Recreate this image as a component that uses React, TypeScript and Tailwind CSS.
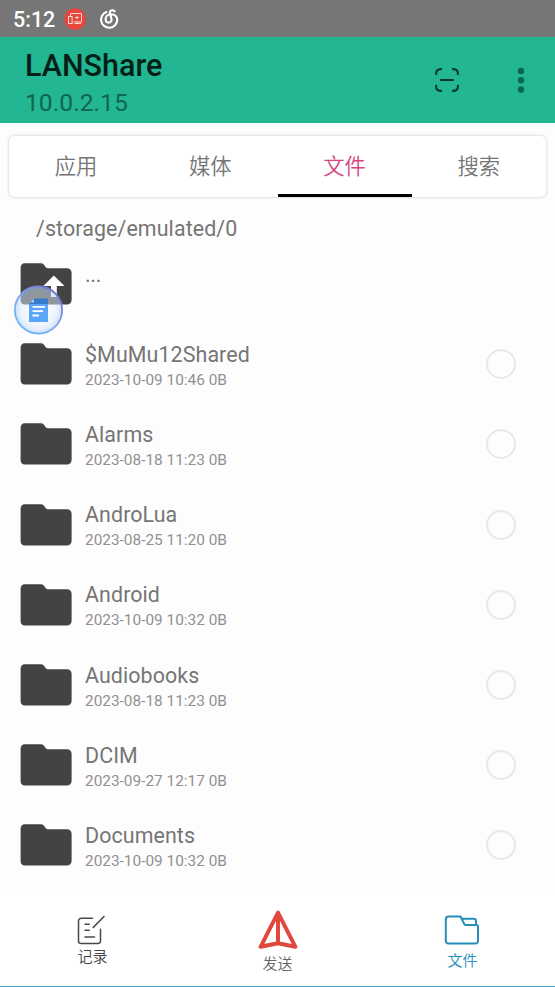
import clsx from "clsx";

type Entry = { name: string; meta: string };

const entries: Entry[] = [
  { name: "$MuMu12Shared", meta: "2023-10-09 10:46 0B" },
  { name: "Alarms", meta: "2023-08-18 11:23 0B" },
  { name: "AndroLua", meta: "2023-08-25 11:20 0B" },
  { name: "Android", meta: "2023-10-09 10:32 0B" },
  { name: "Audiobooks", meta: "2023-08-18 11:23 0B" },
  { name: "DCIM", meta: "2023-09-27 12:17 0B" },
  { name: "Documents", meta: "2023-10-09 10:32 0B" },
];

const tabs = ["应用", "媒体", "文件", "搜索"];
const activeTab = "文件";

export default function App() {
  return (
    <div className="relative flex h-[987px] w-[555px] flex-col overflow-hidden bg-[#fdfdfd] font-['Roboto','Noto_Sans_CJK_SC',sans-serif] text-[#757575]">
      <StatusBar />
      <AppBar />
      <TabStrip />
      <p className="mt-[18px] pl-9 text-[21.4px] leading-[28px] tracking-[0.1px]">
        /storage/emulated/0
      </p>
      <main className="flex flex-col">
        <ParentRow />
        {entries.map((entry) => (
          <EntryRow key={entry.name} entry={entry} />
        ))}
      </main>
      <BottomNav />
      <FloatingBubble />
    </div>
  );
}

function StatusBar() {
  return (
    <div className="flex h-[37px] shrink-0 items-center bg-[#767676] pl-[13px] text-white">
      <span className="w-[51px] pt-[2px] text-[21.5px] leading-none font-medium">5:12</span>
      <svg className="h-[22px] w-[22px]" viewBox="0 0 22 22" fill="none">
        <circle cx="11" cy="11" r="10.8" fill="#e5473c" />
        <g stroke="#fbd5d1" strokeWidth="1">
          <path d="M6.5 8V5.5H17.5v8.4H9.5" />
          <rect x="4.5" y="8.5" width="3.6" height="7" />
          <path d="M4 15.5h4.6M13.2 14v1.8M10.5 15.5h6.6M11 9.5h4M13 7.8v3.4" />
        </g>
      </svg>
      <svg
        className="ml-[14px] h-[20px] w-[20px]"
        viewBox="0 0 20 20"
        fill="none"
        stroke="white"
        strokeWidth="2.1"
        strokeLinecap="round"
      >
        <path d="M6.5 3A8.1 8.1 0 1 0 17.3 10.9C17.3 7.2 14.1 5 10.8 5.2C7.5 5.4 5.5 7.8 5.6 10.3C5.7 12.3 7 13.6 8.7 13.6C10.7 13.6 11.9 11.9 11.4 9.8L10 4.2C9.6 2.3 10.7 1.2 12.2 1.2C13.2 1.2 14 1.7 14.6 2.3" />
      </svg>
    </div>
  );
}

function AppBar() {
  return (
    <header className="flex h-[86px] shrink-0 bg-[#23b692]">
      <div className="flex-1 pl-[25px]">
        <h1 className="mt-[11px] text-[30.5px] leading-[36px] font-medium text-[#041f18]">LANShare</h1>
        <p className="mt-[4px] text-[24.7px] leading-[30px] text-[#0f6550]">10.0.2.15</p>
      </div>
      <svg
        className="mt-[31px] h-6 w-6"
        viewBox="0 0 24 24"
        fill="none"
        stroke="#0a382d"
        strokeWidth="2.2"
        strokeLinecap="round"
      >
        <path d="M1.1 6.1V5.4A4.3 4.3 0 0 1 5.4 1.1H6.1M17.9 1.1h.7a4.3 4.3 0 0 1 4.3 4.3v.7M22.9 17.9v.7a4.3 4.3 0 0 1-4.3 4.3h-.7M6.1 22.9h-.7a4.3 4.3 0 0 1-4.3-4.3v-.7M6 12h12" />
      </svg>
      <svg className="mt-[30px] mr-[30px] ml-[58px] h-[27px] w-2" viewBox="0 0 8 27" fill="#0b6650" overflow="visible">
        <circle cx="4" cy="4" r="3.2" />
        <circle cx="4" cy="13.2" r="3.2" />
        <circle cx="4" cy="22.5" r="3.2" />
      </svg>
    </header>
  );
}

function TabStrip() {
  return (
    <nav className="mx-[9px] mt-[13px] flex h-[61px] shrink-0 rounded-[5px] bg-white shadow-[0_0_3px_rgba(0,0,0,0.25)]">
      {tabs.map((tab) => (
        <div
          key={tab}
          className={clsx(
            "flex flex-1 items-center justify-center border-b-[3px] pt-[4px] text-[21.3px] leading-none font-[350]",
            tab === activeTab ? "border-black text-[#d6447f]" : "border-transparent",
          )}
        >
          {tab}
        </div>
      ))}
    </nav>
  );
}

function FolderIcon({ up = false }: { up?: boolean }) {
  return (
    <svg className="mt-[20px] h-[42px] w-[52px] shrink-0" viewBox="0 0 52 42">
      <path
        d="M5 .2H21.2a3 3 0 0 1 2.1 .9L26 4.4a2.4 2.4 0 0 0 1.8 .8H47a4.6 4.6 0 0 1 4.6 4.6V36.9a4.6 4.6 0 0 1-4.6 4.6H5A4.6 4.6 0 0 1 .6 36.9V4.8A4.6 4.6 0 0 1 5 .2Z"
        fill="#434343"
      />
      {up && <path d="M33.8 12.6 44.5 23H36.8V34H31V23H23.3Z" fill="white" />}
    </svg>
  );
}

function ParentRow() {
  return (
    <div className="flex h-[80.2px] pl-[20px]">
      <FolderIcon up />
      <span className="mt-[19px] ml-[13px] text-[21.4px] leading-[26px] tracking-[-0.3px]">...</span>
    </div>
  );
}

function EntryRow({ entry }: { entry: Entry }) {
  return (
    <div className="flex h-[80.2px] pr-[39px] pl-[20px]">
      <FolderIcon />
      <div className="ml-[13px] flex-1">
        <div className="mt-[18.7px] text-[21.4px] leading-[26px] tracking-[0.1px]">{entry.name}</div>
        <div className="mt-[1.9px] text-[15.4px] leading-[20px] text-[#919191]">{entry.meta}</div>
      </div>
      <span className="mt-[26px] h-[30px] w-[30px] rounded-full border-2 border-[#e8e8e8]" />
    </div>
  );
}

/* translucent overlay button floating over the list */
function FloatingBubble() {
  return (
    <svg
      className="absolute top-[282px] left-[10px] h-[56px] w-[58px]"
      viewBox="0 0 58 56"
      overflow="visible"
    >
      <defs>
        <linearGradient id="ring" x1="0" y1="1" x2="0.9" y2="0">
          <stop offset="0" stopColor="#62b8fa" />
          <stop offset="0.5" stopColor="#7fa8ee" />
          <stop offset="1" stopColor="#6c62c9" />
        </linearGradient>
        <radialGradient id="glass">
          <stop offset="0.35" stopColor="#f4f6fd" stopOpacity="0.48" />
          <stop offset="0.75" stopColor="#dbe8fc" stopOpacity="0.5" />
          <stop offset="1" stopColor="#a9cdfb" stopOpacity="0.62" />
        </radialGradient>
        <radialGradient id="glow">
          <stop offset="0.8" stopColor="#8ab9f5" stopOpacity="0.4" />
          <stop offset="1" stopColor="#8ab9f5" stopOpacity="0" />
        </radialGradient>
        <linearGradient id="sheet" x1="0" y1="0" x2="0" y2="1">
          <stop offset="0.22" stopColor="#357dca" />
          <stop offset="0.24" stopColor="#5ba5fa" />
        </linearGradient>
      </defs>
      {/* halo sits outside the ring only */}
      <circle cx="28.5" cy="28" r="25.5" fill="none" stroke="url(#glow)" strokeWidth="5" />
      <circle cx="28.5" cy="28" r="23.6" fill="url(#glass)" stroke="url(#ring)" strokeWidth="1.7" />
      <path d="M24 16.5H38V40H19V21.5Z" fill="url(#sheet)" />
      <path d="M20.3 20.6 23.8 17v3.6Z" fill="#b7d7fa" />
      <path d="M22.5 24.8H35M22.5 29.2H33M22.5 33.5H29" stroke="white" strokeWidth="1.8" />
    </svg>
  );
}

function BottomNav() {
  return (
    <footer className="absolute inset-x-0 bottom-0 grid h-[92px] grid-cols-3 border-b border-[#45acd0] bg-white text-[15px] leading-[20px]">
      <div className="flex flex-col items-center pt-[20px] text-[#444]">
        <svg
          className="mr-[3px] h-[30px] w-[28px]"
          viewBox="0 0 28 30"
          fill="none"
          stroke="#484848"
          strokeWidth="1.5"
          strokeLinecap="round"
        >
          <path d="M15.5 3.2H4.3A2.8 2.8 0 0 0 1.5 6V26A2.8 2.8 0 0 0 4.3 28.6H20.7A2.8 2.8 0 0 0 23.5 26V14.2M16.3 12.4 27 1.5M8 9.3h4.2M8 15.2h4.2M8 22h9.5" />
        </svg>
        <span className="mt-[2px] font-[350]">记录</span>
      </div>
      <div className="flex flex-col items-center pt-[15px] font-[350] text-[#666]">
        <svg
          className="h-[40px] w-[40px]"
          viewBox="0 0 40 40"
          fill="none"
          stroke="#e0483e"
          strokeWidth="4"
          strokeLinejoin="round"
        >
          <path d="M20 2.7 2.6 36.8 20 33.2 37.4 36.8ZM20 3V33" />
        </svg>
        <span className="mt-[4px]">发送</span>
      </div>
      <div className="flex flex-col items-center pt-[20px] text-[#278ebc]">
        <svg
          className="mr-[2px] h-[30px] w-[36px]"
          viewBox="0 0 36 30"
          fill="none"
          stroke="#278ebc"
          strokeWidth="2"
          strokeLinejoin="round"
        >
          <path d="M4.5 1.5H16.5L20.4 9.2A1.6 1.6 0 0 0 21.9 10H32.4Q34 10 34 11.6V26A2.7 2.7 0 0 1 31.3 28.5H4.5A2.7 2.7 0 0 1 1.8 26V4.2A2.7 2.7 0 0 1 4.5 1.5ZM17.5 3.8H29.6A2.4 2.4 0 0 1 32 6.2V10" />
        </svg>
        <span className="mt-[6px] font-[350]">文件</span>
      </div>
    </footer>
  );
}
